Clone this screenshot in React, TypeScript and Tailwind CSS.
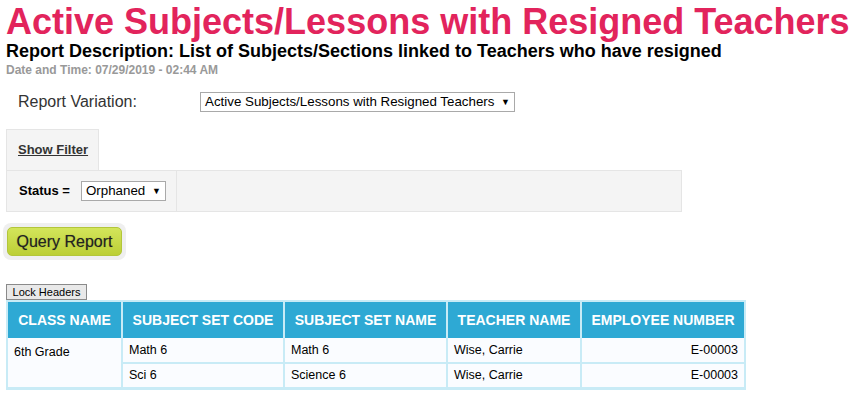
const rows = [
  { code: 'Math 6', name: 'Math 6', teacher: 'Wise, Carrie', emp: 'E-00003' },
  { code: 'Sci 6', name: 'Science 6', teacher: 'Wise, Carrie', emp: 'E-00003' },
];

function FakeSelect({ label, className }: { label: string; className?: string }) {
  return (
    <div
      className={`flex items-center justify-between border border-[#a9a9a9] bg-white px-[4px] text-[13.33px] leading-none text-black ${className ?? ''}`}
    >
      <span>{label}</span>
      <span className="ml-[6px] text-[9px]">▼</span>
    </div>
  );
}

function App() {
  return (
    <div className="min-h-screen bg-white font-['Liberation_Sans',Arial,sans-serif] text-black">
      <div className="pl-[6px] pt-[2px]">
        <h1 className="text-[36px] font-bold leading-[39px] text-[#e2245c]">
          Active Subjects/Lessons with Resigned Teachers
        </h1>
        <div className="text-[18px] font-bold leading-[20px]">
          Report Description: List of Subjects/Sections linked to Teachers who have resigned
        </div>
        <div className="mt-[2px] text-[12px] font-bold leading-[14px] text-[#999]">
          Date and Time: 07/29/2019 - 02:44 AM
        </div>

        <div className="mt-[15px] flex h-[20px] items-center">
          <div className="w-[194px] pl-[12px] text-[16px] leading-[20px] text-[#333]">Report Variation:</div>
          <FakeSelect label="Active Subjects/Lessons with Resigned Teachers" className="h-[20px] w-[315px]" />
        </div>

        <div className="mt-[17px] w-[676px]">
          <div className="flex h-[41px] w-[93px] items-center border border-b-0 border-[#e5e5e5] bg-[#f4f4f4] pl-[11px]">
            <span className="text-[13px] font-bold text-[#333] underline">Show Filter</span>
          </div>
          <div className="flex h-[42px] border border-[#e5e5e5] bg-[#f4f4f4]">
            <div className="flex items-center border-r border-[#e5e5e5] pl-[12px] pr-[10px]">
              <span className="mr-[11px] text-[13px] font-bold">Status =</span>
              <FakeSelect label="Orphaned" className="h-[20px] w-[85px]" />
            </div>
          </div>
        </div>

        <div className="mt-[11px] ml-[-3px] flex w-fit rounded-[8px] bg-[#efefef] p-[4px]">
          <button className="flex h-[29px] w-[115px] items-center justify-center rounded-[5px] border border-[#b3c63a] bg-gradient-to-b from-[#d3e55a] to-[#bccf35] text-[16px] text-[#222] [text-shadow:0_0_1px_rgba(0,0,0,0.35)]">
            Query Report
          </button>
        </div>

        <div className="mt-[24px] flex">
          <button className="h-[16px] w-[81px] border border-[#8a8a8a] bg-[#e9e9e9] text-[11px] leading-none">
            Lock Headers
          </button>
        </div>

        <table className="border-collapse border-2 border-b-[3px] border-[#c8ebf6] text-[12.5px]">
          <thead>
            <tr className="h-[37px] bg-[#2ea9d4] text-[14px] font-bold text-white">
              <th className="w-[115px] border-r-2 border-[#c8ebf6] text-center font-bold">CLASS NAME</th>
              <th className="w-[162px] border-r-2 border-[#c8ebf6] text-center font-bold">SUBJECT SET CODE</th>
              <th className="w-[163px] border-r-2 border-[#c8ebf6] text-center font-bold">SUBJECT SET NAME</th>
              <th className="w-[134px] border-r-2 border-[#c8ebf6] text-center font-bold">TEACHER NAME</th>
              <th className="w-[164px] text-center font-bold">EMPLOYEE NUMBER</th>
            </tr>
          </thead>
          <tbody className="bg-[#fafcff]">
            {rows.map((r, i) => (
              <tr key={r.code} className="h-[25px]">
                {i === 0 && (
                  <td rowSpan={2} className="border-r-2 border-[#c8ebf6] pl-[6px] pt-[5px] align-top">
                    6th Grade
                  </td>
                )}
                <td className="border-r-2 border-b-2 border-[#c8ebf6] pl-[6px] pt-[1px]">{r.code}</td>
                <td className="border-r-2 border-b-2 border-[#c8ebf6] pl-[6px] pt-[1px]">{r.name}</td>
                <td className="border-r-2 border-b-2 border-[#c8ebf6] pl-[6px] pt-[1px]">{r.teacher}</td>
                <td className="border-b-2 border-[#c8ebf6] pr-[6px] pt-[1px] text-right">{r.emp}</td>
              </tr>
            ))}
          </tbody>
        </table>
      </div>
    </div>
  );
}

export default App;
